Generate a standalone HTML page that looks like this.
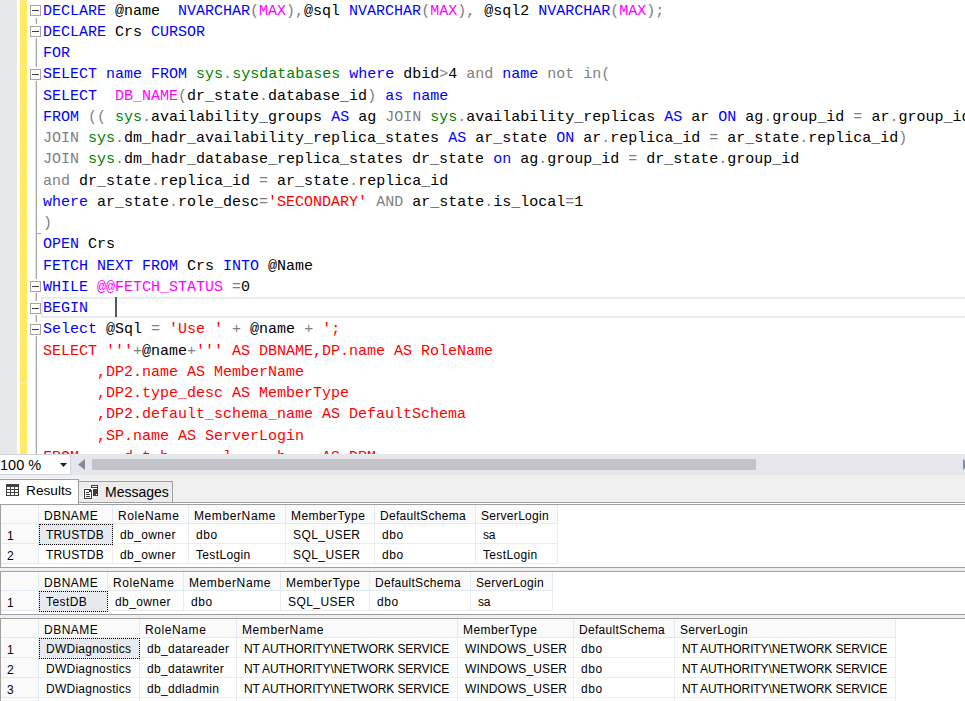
<!DOCTYPE html>
<html><head><meta charset="utf-8"><style>
html,body{margin:0;padding:0}
body{width:965px;height:701px;overflow:hidden;position:relative;background:#fff}
#ed{position:absolute;left:0;top:0;width:965px;height:454px;overflow:hidden;background:#fff}
.ln{position:absolute;left:43px;height:21.25px;line-height:21.25px;white-space:pre;font-family:"Liberation Mono",monospace;font-size:15px;color:#000}
.gt{position:absolute;height:19px;line-height:19px;white-space:pre;font-family:"Liberation Sans",sans-serif;font-size:12px;color:#000}
</style></head><body>
<div id="ed">
<div style="position:absolute;left:0;top:0;width:17px;height:454px;background:#e6e7e8"></div>
<div style="position:absolute;left:20px;top:0;width:7px;height:454px;background:#ffea62;background-image:repeating-linear-gradient(to bottom, rgba(255,255,255,0.2) 0, rgba(255,255,255,0.2) 1px, transparent 1px, transparent 21.25px)"></div>
<div style="position:absolute;left:35px;top:18px;width:1px;height:436px;background:#e2e2e2"></div><div style="position:absolute;left:36px;top:18px;width:1px;height:436px;background:#a8a8a8"></div><div style="position:absolute;left:36px;top:233px;width:5px;height:1px;background:#a8a8a8"></div><div style="position:absolute;left:29px;top:3px;width:13px;height:14px;background:#fff"></div><div style="position:absolute;left:30px;top:5px;width:9px;height:9px;border:1px solid #a5a5a5;background:#fff"></div><div style="position:absolute;left:32px;top:10px;width:7px;height:1px;background:#404040"></div><div style="position:absolute;left:29px;top:24px;width:13px;height:14px;background:#fff"></div><div style="position:absolute;left:30px;top:26px;width:9px;height:9px;border:1px solid #a5a5a5;background:#fff"></div><div style="position:absolute;left:32px;top:31px;width:7px;height:1px;background:#404040"></div><div style="position:absolute;left:29px;top:67px;width:13px;height:14px;background:#fff"></div><div style="position:absolute;left:30px;top:69px;width:9px;height:9px;border:1px solid #a5a5a5;background:#fff"></div><div style="position:absolute;left:32px;top:74px;width:7px;height:1px;background:#404040"></div><div style="position:absolute;left:29px;top:279px;width:13px;height:14px;background:#fff"></div><div style="position:absolute;left:30px;top:281px;width:9px;height:9px;border:1px solid #a5a5a5;background:#fff"></div><div style="position:absolute;left:32px;top:286px;width:7px;height:1px;background:#404040"></div><div style="position:absolute;left:29px;top:301px;width:13px;height:14px;background:#fff"></div><div style="position:absolute;left:30px;top:303px;width:9px;height:9px;border:1px solid #a5a5a5;background:#fff"></div><div style="position:absolute;left:32px;top:308px;width:7px;height:1px;background:#404040"></div><div style="position:absolute;left:29px;top:322px;width:13px;height:14px;background:#fff"></div><div style="position:absolute;left:30px;top:324px;width:9px;height:9px;border:1px solid #a5a5a5;background:#fff"></div><div style="position:absolute;left:32px;top:329px;width:7px;height:1px;background:#404040"></div>
<div style="position:absolute;left:41px;top:297px;width:930px;height:17px;border:2px solid #eaeaf1;border-right:none"></div>
<div style="position:absolute;left:115px;top:297px;width:2px;height:20px;background:#5a5a5a"></div>
<div class="ln" style="top:1px"><span style="color:#0000ff">DECLARE</span><span style="color:#000000"> @name  </span><span style="color:#0000ff">NVARCHAR</span><span style="color:#808080">(</span><span style="color:#ff00ff">MAX</span><span style="color:#808080">),</span><span style="color:#000000">@sql </span><span style="color:#0000ff">NVARCHAR</span><span style="color:#808080">(</span><span style="color:#ff00ff">MAX</span><span style="color:#808080">),</span><span style="color:#000000"> @sql2 </span><span style="color:#0000ff">NVARCHAR</span><span style="color:#808080">(</span><span style="color:#ff00ff">MAX</span><span style="color:#808080">);</span></div><div class="ln" style="top:22px"><span style="color:#0000ff">DECLARE</span><span style="color:#000000"> Crs </span><span style="color:#0000ff">CURSOR</span></div><div class="ln" style="top:43px"><span style="color:#0000ff">FOR</span></div><div class="ln" style="top:64px"><span style="color:#0000ff">SELECT</span><span style="color:#000000"> </span><span style="color:#0000ff">name</span><span style="color:#000000"> </span><span style="color:#0000ff">FROM</span><span style="color:#000000"> </span><span style="color:#008000">sys</span><span style="color:#808080">.</span><span style="color:#008000">sysdatabases</span><span style="color:#000000"> </span><span style="color:#0000ff">where</span><span style="color:#000000"> dbid</span><span style="color:#808080">&gt;</span><span style="color:#000000">4 </span><span style="color:#808080">and</span><span style="color:#000000"> </span><span style="color:#0000ff">name</span><span style="color:#000000"> </span><span style="color:#808080">not in(</span></div><div class="ln" style="top:86px"><span style="color:#0000ff">SELECT</span><span style="color:#000000">  </span><span style="color:#ff00ff">DB_NAME</span><span style="color:#808080">(</span><span style="color:#000000">dr_state</span><span style="color:#808080">.</span><span style="color:#000000">database_id</span><span style="color:#808080">)</span><span style="color:#000000"> </span><span style="color:#0000ff">as</span><span style="color:#000000"> </span><span style="color:#0000ff">name</span></div><div class="ln" style="top:107px"><span style="color:#0000ff">FROM</span><span style="color:#000000"> </span><span style="color:#808080">((</span><span style="color:#000000"> </span><span style="color:#008000">sys</span><span style="color:#808080">.</span><span style="color:#000000">availability_groups </span><span style="color:#0000ff">AS</span><span style="color:#000000"> ag </span><span style="color:#808080">JOIN</span><span style="color:#000000"> </span><span style="color:#008000">sys</span><span style="color:#808080">.</span><span style="color:#000000">availability_replicas </span><span style="color:#0000ff">AS</span><span style="color:#000000"> ar </span><span style="color:#0000ff">ON</span><span style="color:#000000"> ag</span><span style="color:#808080">.</span><span style="color:#000000">group_id </span><span style="color:#808080">=</span><span style="color:#000000"> ar</span><span style="color:#808080">.</span><span style="color:#000000">group_id</span></div><div class="ln" style="top:128px"><span style="color:#808080">JOIN</span><span style="color:#000000"> </span><span style="color:#008000">sys</span><span style="color:#808080">.</span><span style="color:#000000">dm_hadr_availability_replica_states </span><span style="color:#0000ff">AS</span><span style="color:#000000"> ar_state </span><span style="color:#0000ff">ON</span><span style="color:#000000"> ar</span><span style="color:#808080">.</span><span style="color:#000000">replica_id </span><span style="color:#808080">=</span><span style="color:#000000"> ar_state</span><span style="color:#808080">.</span><span style="color:#000000">replica_id</span><span style="color:#808080">)</span></div><div class="ln" style="top:149px"><span style="color:#808080">JOIN</span><span style="color:#000000"> </span><span style="color:#008000">sys</span><span style="color:#808080">.</span><span style="color:#000000">dm_hadr_database_replica_states dr_state </span><span style="color:#0000ff">on</span><span style="color:#000000"> ag</span><span style="color:#808080">.</span><span style="color:#000000">group_id </span><span style="color:#808080">=</span><span style="color:#000000"> dr_state</span><span style="color:#808080">.</span><span style="color:#000000">group_id</span></div><div class="ln" style="top:171px"><span style="color:#808080">and</span><span style="color:#000000"> dr_state</span><span style="color:#808080">.</span><span style="color:#000000">replica_id </span><span style="color:#808080">=</span><span style="color:#000000"> ar_state</span><span style="color:#808080">.</span><span style="color:#000000">replica_id</span></div><div class="ln" style="top:192px"><span style="color:#0000ff">where</span><span style="color:#000000"> ar_state</span><span style="color:#808080">.</span><span style="color:#000000">role_desc</span><span style="color:#808080">=</span><span style="color:#ff0000">&#x27;SECONDARY&#x27;</span><span style="color:#000000"> </span><span style="color:#808080">AND</span><span style="color:#000000"> ar_state</span><span style="color:#808080">.</span><span style="color:#000000">is_local</span><span style="color:#808080">=</span><span style="color:#000000">1</span></div><div class="ln" style="top:213px"><span style="color:#808080">)</span></div><div class="ln" style="top:234px"><span style="color:#0000ff">OPEN</span><span style="color:#000000"> Crs</span></div><div class="ln" style="top:256px"><span style="color:#0000ff">FETCH</span><span style="color:#000000"> </span><span style="color:#0000ff">NEXT</span><span style="color:#000000"> </span><span style="color:#0000ff">FROM</span><span style="color:#000000"> Crs </span><span style="color:#0000ff">INTO</span><span style="color:#000000"> @Name</span></div><div class="ln" style="top:277px"><span style="color:#0000ff">WHILE</span><span style="color:#000000"> </span><span style="color:#ff00ff">@@FETCH_STATUS</span><span style="color:#000000"> </span><span style="color:#808080">=</span><span style="color:#000000">0</span></div><div class="ln" style="top:298px"><span style="color:#0000ff">BEGIN</span></div><div class="ln" style="top:319px"><span style="color:#0000ff">Select</span><span style="color:#000000"> @Sql </span><span style="color:#808080">=</span><span style="color:#000000"> </span><span style="color:#ff0000">&#x27;Use &#x27;</span><span style="color:#000000"> </span><span style="color:#808080">+</span><span style="color:#000000"> @name </span><span style="color:#808080">+</span><span style="color:#000000"> </span><span style="color:#ff0000">&#x27;;</span></div><div class="ln" style="top:341px"><span style="color:#ff0000">SELECT &#x27;&#x27;&#x27;</span><span style="color:#808080">+</span><span style="color:#000000">@name</span><span style="color:#808080">+</span><span style="color:#ff0000">&#x27;&#x27;&#x27; AS DBNAME,DP.name AS RoleName</span></div><div class="ln" style="top:362px"><span style="color:#ff0000">      ,DP2.name AS MemberName</span></div><div class="ln" style="top:383px"><span style="color:#ff0000">      ,DP2.type_desc AS MemberType</span></div><div class="ln" style="top:404px"><span style="color:#ff0000">      ,DP2.default_schema_name AS DefaultSchema</span></div><div class="ln" style="top:426px"><span style="color:#ff0000">      ,SP.name AS ServerLogin</span></div><div class="ln" style="top:447px"><span style="color:#ff0000">FROM     d t b      l     b    AS DRM</span></div>
</div>
<div style="position:absolute;left:0;top:454px;width:965px;height:21px;background:#e6e7ec"></div>
<div style="position:absolute;left:-1px;top:454px;width:70px;height:19px;background:#fff;border:1px solid #cdd2e2"></div>
<div style="position:absolute;left:0px;top:455px;height:21px;line-height:21px;font-family:'Liberation Sans',sans-serif;font-size:14.5px;color:#000">100 %</div>
<svg width="8" height="5" style="position:absolute;left:60px;top:463px"><polygon points="0,0 7,0 3.5,4" fill="#1e1e2e"/></svg>
<svg width="8" height="12" style="position:absolute;left:78px;top:459px"><polygon points="7,0 7,11 0,5.5" fill="#868999"/></svg>
<div style="position:absolute;left:92px;top:459px;width:664px;height:11px;background:#c2c3c9"></div>
<svg width="3" height="12" style="position:absolute;left:962.5px;top:459px"><polygon points="0,0 0,11 5.5,5.5" fill="#868999"/></svg>
<div style="position:absolute;left:0;top:475px;width:965px;height:29px;background:#f0f0f0"></div>
<div style="position:absolute;left:0;top:502px;width:965px;height:1px;background:#a0a0a0"></div>
<div style="position:absolute;left:0;top:503px;width:965px;height:1px;background:#fff"></div>
<div style="position:absolute;left:78px;top:481px;width:95px;height:22px;background:#ececec;border:1px solid #a0a0a0;box-sizing:border-box"></div>
<div style="position:absolute;left:-1px;top:479px;width:80px;height:25px;background:#fff;border:1px solid #a0a0a0;border-bottom:none;box-sizing:border-box"></div>
<svg width="14" height="13" style="position:absolute;left:6px;top:484px">
<rect x="0" y="0" width="13" height="12" fill="#424242"/>
<rect x="1" y="3" width="3" height="2" fill="#fff"/><rect x="5" y="3" width="3" height="2" fill="#fff"/><rect x="9" y="3" width="3" height="2" fill="#fff"/>
<rect x="1" y="6" width="3" height="2" fill="#fff"/><rect x="5" y="6" width="3" height="2" fill="#fff"/><rect x="9" y="6" width="3" height="2" fill="#fff"/>
<rect x="1" y="9" width="3" height="2" fill="#fff"/><rect x="5" y="9" width="3" height="2" fill="#fff"/><rect x="9" y="9" width="3" height="2" fill="#fff"/>
</svg>
<div style="position:absolute;left:26px;top:479px;height:24px;line-height:24px;font-family:'Liberation Sans',sans-serif;font-size:13.7px;color:#000">Results</div>
<svg width="18" height="18" style="position:absolute;left:82px;top:482px" shape-rendering="crispEdges">
<rect x="9" y="3" width="7" height="11" fill="#3c3c3c"/>
<rect x="10" y="4" width="5" height="1" fill="#fff"/><rect x="10" y="6" width="5" height="1" fill="#fff"/><rect x="14" y="12" width="1" height="1" fill="#fff"/>
<rect x="1" y="6" width="10" height="12" fill="#fff"/>
<path d="M2,7 H8 L10,9 V17 H2 Z" fill="#3c3c3c"/>
<path d="M3,8 H7 L9,10 V16 H3 Z" fill="#fff"/>
<rect x="7" y="8" width="1" height="2" fill="#3c3c3c"/><rect x="8" y="9" width="1" height="1" fill="#3c3c3c"/>
<rect x="4" y="10" width="3" height="1" fill="#3c3c3c"/><rect x="4" y="12" width="4" height="1" fill="#3c3c3c"/><rect x="4" y="14" width="4" height="1" fill="#3c3c3c"/>
</svg>
<div style="position:absolute;left:105px;top:482px;height:21px;line-height:21px;font-family:'Liberation Sans',sans-serif;font-size:14px;color:#000">Messages</div>
<div style="position:absolute;left:0;top:504px;width:965px;height:197px;background:#fff"></div>
<div style="position:absolute;left:0;top:567px;width:965px;height:5px;background:#f0f0f0"></div>
<div style="position:absolute;left:0;top:614px;width:965px;height:5px;background:#f0f0f0"></div>
<div style="position:absolute;left:1px;top:505px;width:556px;height:19px;background:#fafafa"></div><div style="position:absolute;left:1px;top:523px;width:37px;height:41px;background:#fafafa"></div><div style="position:absolute;left:1px;top:523px;width:557px;height:1px;background:#e1e9f5"></div><div style="position:absolute;left:38px;top:505px;width:1px;height:19px;background:#e1e9f5"></div><div style="position:absolute;left:38px;top:524px;width:1px;height:40px;background:#e1e9f5"></div><div style="position:absolute;left:112px;top:505px;width:1px;height:19px;background:#e1e9f5"></div><div style="position:absolute;left:112px;top:524px;width:1px;height:40px;background:#ececec"></div><div style="position:absolute;left:188px;top:505px;width:1px;height:19px;background:#e1e9f5"></div><div style="position:absolute;left:188px;top:524px;width:1px;height:40px;background:#ececec"></div><div style="position:absolute;left:285px;top:505px;width:1px;height:19px;background:#e1e9f5"></div><div style="position:absolute;left:285px;top:524px;width:1px;height:40px;background:#ececec"></div><div style="position:absolute;left:374px;top:505px;width:1px;height:19px;background:#e1e9f5"></div><div style="position:absolute;left:374px;top:524px;width:1px;height:40px;background:#ececec"></div><div style="position:absolute;left:475px;top:505px;width:1px;height:19px;background:#e1e9f5"></div><div style="position:absolute;left:475px;top:524px;width:1px;height:40px;background:#ececec"></div><div style="position:absolute;left:557px;top:505px;width:1px;height:19px;background:#e1e9f5"></div><div style="position:absolute;left:557px;top:524px;width:1px;height:40px;background:#ececec"></div><div style="position:absolute;left:1px;top:543px;width:37px;height:1px;background:#e1e9f5"></div><div style="position:absolute;left:39px;top:543px;width:519px;height:1px;background:#ececec"></div><div style="position:absolute;left:1px;top:563px;width:37px;height:1px;background:#e1e9f5"></div><div style="position:absolute;left:39px;top:563px;width:519px;height:1px;background:#ececec"></div><div class="gt" style="left:44px;top:507px;letter-spacing:0.5px">DBNAME</div><div class="gt" style="left:118px;top:507px;letter-spacing:0.6px">RoleName</div><div class="gt" style="left:194px;top:507px;letter-spacing:0.6px">MemberName</div><div class="gt" style="left:291px;top:507px;letter-spacing:0.42px">MemberType</div><div class="gt" style="left:380px;top:507px;letter-spacing:0.3px">DefaultSchema</div><div class="gt" style="left:481px;top:507px;letter-spacing:0.3px">ServerLogin</div><div style="position:absolute;left:39px;top:524px;width:74px;height:21px;background:#e6eaef;outline:1px dotted #000;outline-offset:-1px"></div><div class="gt" style="left:7px;top:527px">1</div><div class="gt" style="left:46px;top:526px;letter-spacing:0.17px">TRUSTDB</div><div class="gt" style="left:120px;top:526px;letter-spacing:0.39px">db_owner</div><div class="gt" style="left:196px;top:526px;letter-spacing:0.6px">dbo</div><div class="gt" style="left:293px;top:526px;letter-spacing:0.43px">SQL_USER</div><div class="gt" style="left:382px;top:526px;letter-spacing:0.6px">dbo</div><div class="gt" style="left:483px;top:526px;letter-spacing:-0.15px">sa</div><div class="gt" style="left:7px;top:547px">2</div><div class="gt" style="left:46px;top:546px;letter-spacing:0.17px">TRUSTDB</div><div class="gt" style="left:120px;top:546px;letter-spacing:0.39px">db_owner</div><div class="gt" style="left:196px;top:546px;letter-spacing:0.35px">TestLogin</div><div class="gt" style="left:293px;top:546px;letter-spacing:0.43px">SQL_USER</div><div class="gt" style="left:382px;top:546px;letter-spacing:0.6px">dbo</div><div class="gt" style="left:483px;top:546px;letter-spacing:0.35px">TestLogin</div><div style="position:absolute;left:0;top:504px;width:965px;height:1px;background:#a0a0a0"></div><div style="position:absolute;left:0;top:567px;width:965px;height:1px;background:#a0a0a0"></div><div style="position:absolute;left:0;top:504px;width:1px;height:63px;background:#a0a0a0"></div><div style="position:absolute;left:1px;top:572px;width:551px;height:19px;background:#fafafa"></div><div style="position:absolute;left:1px;top:590px;width:37px;height:21px;background:#fafafa"></div><div style="position:absolute;left:1px;top:590px;width:552px;height:1px;background:#e1e9f5"></div><div style="position:absolute;left:38px;top:572px;width:1px;height:19px;background:#e1e9f5"></div><div style="position:absolute;left:38px;top:591px;width:1px;height:20px;background:#e1e9f5"></div><div style="position:absolute;left:107px;top:572px;width:1px;height:19px;background:#e1e9f5"></div><div style="position:absolute;left:107px;top:591px;width:1px;height:20px;background:#ececec"></div><div style="position:absolute;left:183px;top:572px;width:1px;height:19px;background:#e1e9f5"></div><div style="position:absolute;left:183px;top:591px;width:1px;height:20px;background:#ececec"></div><div style="position:absolute;left:280px;top:572px;width:1px;height:19px;background:#e1e9f5"></div><div style="position:absolute;left:280px;top:591px;width:1px;height:20px;background:#ececec"></div><div style="position:absolute;left:369px;top:572px;width:1px;height:19px;background:#e1e9f5"></div><div style="position:absolute;left:369px;top:591px;width:1px;height:20px;background:#ececec"></div><div style="position:absolute;left:470px;top:572px;width:1px;height:19px;background:#e1e9f5"></div><div style="position:absolute;left:470px;top:591px;width:1px;height:20px;background:#ececec"></div><div style="position:absolute;left:552px;top:572px;width:1px;height:19px;background:#e1e9f5"></div><div style="position:absolute;left:552px;top:591px;width:1px;height:20px;background:#ececec"></div><div style="position:absolute;left:1px;top:610px;width:37px;height:1px;background:#e1e9f5"></div><div style="position:absolute;left:39px;top:610px;width:514px;height:1px;background:#ececec"></div><div class="gt" style="left:44px;top:574px;letter-spacing:0.5px">DBNAME</div><div class="gt" style="left:113px;top:574px;letter-spacing:0.6px">RoleName</div><div class="gt" style="left:189px;top:574px;letter-spacing:0.6px">MemberName</div><div class="gt" style="left:286px;top:574px;letter-spacing:0.42px">MemberType</div><div class="gt" style="left:375px;top:574px;letter-spacing:0.3px">DefaultSchema</div><div class="gt" style="left:476px;top:574px;letter-spacing:0.3px">ServerLogin</div><div style="position:absolute;left:39px;top:591px;width:69px;height:21px;background:#e6eaef;outline:1px dotted #000;outline-offset:-1px"></div><div class="gt" style="left:7px;top:594px">1</div><div class="gt" style="left:46px;top:593px;letter-spacing:0.44px">TestDB</div><div class="gt" style="left:115px;top:593px;letter-spacing:0.39px">db_owner</div><div class="gt" style="left:191px;top:593px;letter-spacing:0.6px">dbo</div><div class="gt" style="left:288px;top:593px;letter-spacing:0.43px">SQL_USER</div><div class="gt" style="left:377px;top:593px;letter-spacing:0.6px">dbo</div><div class="gt" style="left:478px;top:593px;letter-spacing:-0.15px">sa</div><div style="position:absolute;left:0;top:571px;width:965px;height:1px;background:#a0a0a0"></div><div style="position:absolute;left:0;top:614px;width:965px;height:1px;background:#a0a0a0"></div><div style="position:absolute;left:0;top:571px;width:1px;height:43px;background:#a0a0a0"></div><div style="position:absolute;left:1px;top:619px;width:894px;height:19px;background:#fafafa"></div><div style="position:absolute;left:1px;top:637px;width:37px;height:65px;background:#fafafa"></div><div style="position:absolute;left:1px;top:637px;width:895px;height:1px;background:#e1e9f5"></div><div style="position:absolute;left:38px;top:619px;width:1px;height:19px;background:#e1e9f5"></div><div style="position:absolute;left:38px;top:638px;width:1px;height:64px;background:#e1e9f5"></div><div style="position:absolute;left:139px;top:619px;width:1px;height:19px;background:#e1e9f5"></div><div style="position:absolute;left:139px;top:638px;width:1px;height:64px;background:#ececec"></div><div style="position:absolute;left:236px;top:619px;width:1px;height:19px;background:#e1e9f5"></div><div style="position:absolute;left:236px;top:638px;width:1px;height:64px;background:#ececec"></div><div style="position:absolute;left:457px;top:619px;width:1px;height:19px;background:#e1e9f5"></div><div style="position:absolute;left:457px;top:638px;width:1px;height:64px;background:#ececec"></div><div style="position:absolute;left:573px;top:619px;width:1px;height:19px;background:#e1e9f5"></div><div style="position:absolute;left:573px;top:638px;width:1px;height:64px;background:#ececec"></div><div style="position:absolute;left:674px;top:619px;width:1px;height:19px;background:#e1e9f5"></div><div style="position:absolute;left:674px;top:638px;width:1px;height:64px;background:#ececec"></div><div style="position:absolute;left:895px;top:619px;width:1px;height:19px;background:#e1e9f5"></div><div style="position:absolute;left:895px;top:638px;width:1px;height:64px;background:#ececec"></div><div style="position:absolute;left:1px;top:657px;width:37px;height:1px;background:#e1e9f5"></div><div style="position:absolute;left:39px;top:657px;width:857px;height:1px;background:#ececec"></div><div style="position:absolute;left:1px;top:677px;width:37px;height:1px;background:#e1e9f5"></div><div style="position:absolute;left:39px;top:677px;width:857px;height:1px;background:#ececec"></div><div style="position:absolute;left:1px;top:697px;width:37px;height:1px;background:#e1e9f5"></div><div style="position:absolute;left:39px;top:697px;width:857px;height:1px;background:#ececec"></div><div class="gt" style="left:44px;top:621px;letter-spacing:0.5px">DBNAME</div><div class="gt" style="left:145px;top:621px;letter-spacing:0.6px">RoleName</div><div class="gt" style="left:242px;top:621px;letter-spacing:0.6px">MemberName</div><div class="gt" style="left:463px;top:621px;letter-spacing:0.42px">MemberType</div><div class="gt" style="left:579px;top:621px;letter-spacing:0.3px">DefaultSchema</div><div class="gt" style="left:680px;top:621px;letter-spacing:0.3px">ServerLogin</div><div style="position:absolute;left:39px;top:638px;width:101px;height:21px;background:#e6eaef;outline:1px dotted #000;outline-offset:-1px"></div><div class="gt" style="left:7px;top:641px">1</div><div class="gt" style="left:46px;top:640px;letter-spacing:0.25px">DWDiagnostics</div><div class="gt" style="left:147px;top:640px;letter-spacing:0.33px">db_datareader</div><div class="gt" style="left:244px;top:640px;letter-spacing:-0.11px">NT AUTHORITY\NETWORK SERVICE</div><div class="gt" style="left:465px;top:640px;letter-spacing:0.12px">WINDOWS_USER</div><div class="gt" style="left:581px;top:640px;letter-spacing:0.6px">dbo</div><div class="gt" style="left:682px;top:640px;letter-spacing:-0.11px">NT AUTHORITY\NETWORK SERVICE</div><div class="gt" style="left:7px;top:661px">2</div><div class="gt" style="left:46px;top:660px;letter-spacing:0.25px">DWDiagnostics</div><div class="gt" style="left:147px;top:660px;letter-spacing:0.33px">db_datawriter</div><div class="gt" style="left:244px;top:660px;letter-spacing:-0.11px">NT AUTHORITY\NETWORK SERVICE</div><div class="gt" style="left:465px;top:660px;letter-spacing:0.12px">WINDOWS_USER</div><div class="gt" style="left:581px;top:660px;letter-spacing:0.6px">dbo</div><div class="gt" style="left:682px;top:660px;letter-spacing:-0.11px">NT AUTHORITY\NETWORK SERVICE</div><div class="gt" style="left:7px;top:681px">3</div><div class="gt" style="left:46px;top:680px;letter-spacing:0.25px">DWDiagnostics</div><div class="gt" style="left:147px;top:680px;letter-spacing:0.33px">db_ddladmin</div><div class="gt" style="left:244px;top:680px;letter-spacing:-0.11px">NT AUTHORITY\NETWORK SERVICE</div><div class="gt" style="left:465px;top:680px;letter-spacing:0.12px">WINDOWS_USER</div><div class="gt" style="left:581px;top:680px;letter-spacing:0.6px">dbo</div><div class="gt" style="left:682px;top:680px;letter-spacing:-0.11px">NT AUTHORITY\NETWORK SERVICE</div><div style="position:absolute;left:0;top:618px;width:965px;height:1px;background:#a0a0a0"></div><div style="position:absolute;left:0;top:618px;width:1px;height:83px;background:#a0a0a0"></div>
</body></html>
